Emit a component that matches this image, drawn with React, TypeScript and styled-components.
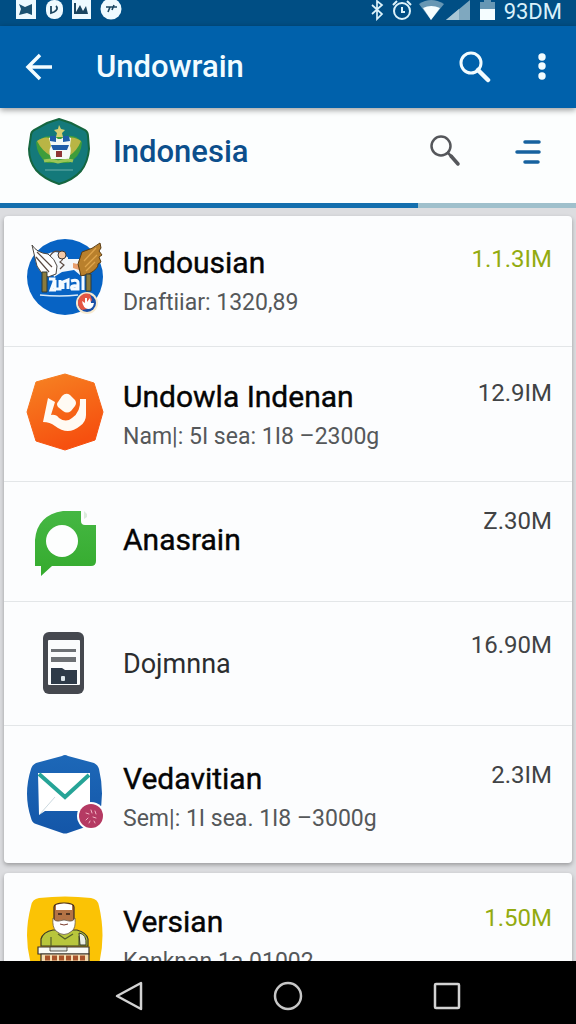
import React from "react";
import styled, { createGlobalStyle } from "styled-components";

const GlobalStyle = createGlobalStyle`
  * { box-sizing: border-box; }
  body { margin: 0; background: #dcdde0; font-family: Roboto, "Noto Sans", sans-serif; }
  ul { list-style: none; margin: 0; padding: 0; }
  h1, h2, h3, p { margin: 0; }
`;

const Screen = styled.div`
  display: flex;
  flex-direction: column;
  height: 100vh;
  overflow: hidden;
`;

const StatusBar = styled.div`
  flex: none;
  display: flex;
  justify-content: space-between;
  height: 26px;
  padding: 0 14px 0 16px;
  background: #004e84;
`;

const StatusGroup = styled.div<{ $gap: number }>`
  display: flex;
  align-items: flex-start;
  gap: ${(p) => p.$gap}px;
`;

const Clock = styled.span`
  font-size: 22px;
  line-height: 24px;
  color: #d9f1fb;
`;

const AppBar = styled.header`
  flex: none;
  display: flex;
  align-items: center;
  height: 82px;
  padding: 0 10px 0 15px;
  background: #0061ab;
  position: relative;
  box-shadow: 0 2px 6px rgba(0, 0, 0, 0.4);
`;

const BarTitle = styled.h1`
  flex: 1;
  padding-left: 33px;
  font-size: 31px;
  line-height: 36px;
  font-weight: 500;
  color: #f2fcff;
`;

const IconButton = styled.button`
  flex: none;
  display: grid;
  place-items: center;
  width: 48px;
  height: 48px;
  padding: 0;
  border: 0;
  background: none;
  cursor: pointer;
`;

const Actions = styled.div<{ $gap: number }>`
  display: flex;
  gap: ${(p) => p.$gap}px;
`;

const AccountBar = styled.section`
  flex: none;
  display: flex;
  align-items: center;
  height: 95px;
  padding: 0 24px 8px 27px;
  background: #fcfefe;
`;

const AccountName = styled.h2`
  flex: 1;
  padding-left: 22px;
  font-size: 31px;
  line-height: 36px;
  font-weight: 500;
  color: #0c4f8c;
`;

const Track = styled.div`
  flex: none;
  height: 5px;
  background: #9fc0cc;
`;

const TrackFill = styled.div`
  height: 100%;
  background: #146fae;
`;

const Feed = styled.main`
  flex: 1;
  min-height: 0;
  overflow: hidden;
  display: flex;
  flex-direction: column;
  gap: 10px;
  padding: 8px 4px 0;
  background: #dcdde0;
`;

const Card = styled.ul`
  flex: none;
  border-radius: 4px;
  background: #fcfdfe;
  box-shadow: 0 2px 4px rgba(0, 0, 0, 0.3);
`;

const Row = styled.li<{ $height: number; $top: number }>`
  display: flex;
  align-items: flex-start;
  min-height: ${(p) => p.$height}px;
  padding: ${(p) => p.$top}px 20px 0;
  & + & {
    border-top: 1px solid #e3e6e8;
  }
`;

const Copy = styled.div<{ $single: boolean }>`
  flex: 1;
  min-width: 0;
  display: flex;
  flex-direction: column;
  justify-content: ${(p) => (p.$single ? "center" : "flex-start")};
  gap: 12px;
  min-height: 82px;
  padding: ${(p) => (p.$single ? 0 : 10)}px 0 0 17px;
`;

const RowTitle = styled.h3<{ $light: boolean }>`
  font-size: ${(p) => (p.$light ? 27 : 30)}px;
  line-height: 32px;
  font-weight: 400;
  color: ${(p) => (p.$light ? "#2b2d2f" : "#050505")};
  -webkit-text-stroke: ${(p) => (p.$light ? "0" : "0.4px #050505")};
`;

const Detail = styled.p`
  font-size: 23px;
  line-height: 24px;
  color: #55585a;
  white-space: nowrap;
`;

const Price = styled.span<{ $accent: boolean }>`
  padding-top: 8px;
  font-size: 24px;
  line-height: 28px;
  color: ${(p) => (p.$accent ? "#93ab10" : "#414345")};
`;

const NavBar = styled.nav`
  flex: none;
  display: flex;
  justify-content: center;
  align-items: center;
  gap: 111px;
  height: 63px;
  padding-top: 6px;
  background: #000;
`;

const Avatar = styled.svg`
  flex: none;
  display: block;
  width: 82px;
  height: 82px;
`;

const EagleArt = () => (
  <Avatar viewBox="0 0 82 82" aria-hidden="true">
    <circle cx="41" cy="40" r="38" fill="#0763c4" />
    <path d="M23 17q8-4 15 0l7 4h18v9l-7 8-6-5-12 2-8 5z" fill="#f4f8fb" />
    <path d="M8 8q5 8 16 9 7 5 9 12l-1 8-8 3-7-5q-5-5-6-14z" fill="#fff" stroke="#4c4742" strokeWidth="1" />
    <path d="M13 15l15 15M12 20l13 15M26 19q4-7 11-4 5 6-1 10l4 3-4 4" fill="none" stroke="#5a4a42" strokeWidth="1.2" />
    <circle cx="38" cy="18" r="4" fill="#f3c9a8" stroke="#3d3836" />
    <path d="M44 18h17v4H44z" fill="#0763c4" />
    <path d="M49 26l9 2v6l-9-3z" fill="#e9a06f" />
    <path d="M76 6q-7 6-18 9l-4 12 3 12 8-2q10-6 9-10l3-2-2-5 3-2-3-4 2-3z" fill="#b9802c" stroke="#5b3d14" strokeWidth="1" />
    <path d="M72 11l-12 13M73 18L61 30M71 25l-9 9" stroke="#e0a54c" strokeWidth="1.3" />
    <path d="M18 35h5v20h-5zM62 37h5v17h-5z" fill="#8b7b3c" stroke="#2d3b3a" strokeWidth="1" />
    <path d="M25 42h5v3l-3 8h5M31 43v9h5v-9M39 52v-7l5-2v9M47 44q7-2 7 2v6h-6q-2-4 5-3M59 39v14" fill="none" stroke="#f5fbff" strokeWidth="3" />
    <path d="M16 58q20 2 38 0" fill="none" stroke="#d8eaf8" strokeWidth="1.6" />
    <circle cx="63" cy="66" r="11" fill="#f7ead0" />
    <circle cx="63" cy="66" r="9" fill="#184fa6" />
    <path d="M54 66a9 9 0 0 1 12-9l2 6-5 9-5 1a9 9 0 0 1-4-7z" fill="#e45543" />
    <path d="M58 64l3 2v-5h2v4l3-4 1 5h3q-1 6-6 6-5-1-6-8z" fill="#fff" />
  </Avatar>
);

const OrangeArt = () => (
  <Avatar viewBox="0 0 82 82" aria-hidden="true">
    <defs>
      <linearGradient id="orange" x1="0" y1="0" x2="0.4" y2="1">
        <stop offset="0" stopColor="#f68423" />
        <stop offset="1" stopColor="#f6500f" />
      </linearGradient>
    </defs>
    <path d="M41 3l29 9 9 29-8 28-30 10-29-9L3 41l9-30z" fill="url(#orange)" stroke="url(#orange)" strokeWidth="1" strokeLinejoin="round" />
    <path d="M38 25q4-4 8-1l5 5q2 3 0 6l-4 5q-4 3-8 0l-5-4q-2-3 0-5z" fill="#fffaf3" />
    <path d="M24 27l7 4-4 13q5-1 8 3 7 5 13 0 9-6 8-19h6v16q0 7-6 11-12 10-25 0-5-4-12-4z" fill="#fffaf3" />
  </Avatar>
);

const GreenArt = () => (
  <Avatar viewBox="0 0 82 82" aria-hidden="true">
    <defs>
      <linearGradient id="green" x1="0" y1="0" x2="0" y2="1">
        <stop offset="0" stopColor="#45b743" />
        <stop offset="1" stopColor="#35ab2e" />
      </linearGradient>
    </defs>
    <path d="M11 67V41q2-25 28-29h18v10q0 4 4 4h11v36q0 5-5 5H28L17 77V67z" fill="url(#green)" />
    <path d="M60 12l3 3v3l-3 2z" fill="#dcebdd" />
    <circle cx="38" cy="42" r="16" fill="#fdfefe" />
  </Avatar>
);

const PhoneArt = () => (
  <Avatar viewBox="0 0 82 82" aria-hidden="true">
    <rect x="19" y="9" width="41" height="62" rx="6" fill="#45484f" />
    <rect x="24" y="17" width="32" height="45" rx="1" fill="#fbfcfd" />
    <path d="M27 26h25v3H27zM27 34h25v5H27z" fill="#6e7175" />
    <path d="M27 45h11l3 2h12v14H27z" fill="#2e3a48" />
    <rect x="37" y="53" width="4" height="5" rx="1" fill="#dfe7ec" />
  </Avatar>
);

const MailArt = () => (
  <Avatar viewBox="0 0 82 82" aria-hidden="true">
    <defs>
      <linearGradient id="mail" x1="0" y1="0" x2="0" y2="1">
        <stop offset="0" stopColor="#1d68b8" />
        <stop offset="1" stopColor="#1456a8" />
      </linearGradient>
    </defs>
    <path d="M38 3q3-2 6 0l26 7q4 2 5 6 6 25 0 48-1 5-5 7l-26 9q-3 1-6 0L12 71q-4-1-5-6-8-24 0-49 1-4 5-6z" fill="url(#mail)" />
    <path d="M14 20h52v38H21l-6 4z" fill="#fff" />
    <path d="M16 61l15-17" stroke="#ccd9df" strokeWidth="1" />
    <path d="M15 21l26 23 24-22" fill="none" stroke="#26a497" strokeWidth="4" />
    <circle cx="67" cy="63" r="14" fill="#fff" />
    <circle cx="67" cy="63" r="12" fill="#b53a63" />
    <path d="M62 60l3 1M67 57l1 3M71 58l1 3M64 65l-2 2M69 64l3 1M66 68l-1 2M70 68l1 2" stroke="#f1b4c4" strokeWidth="1" strokeLinecap="round" />
  </Avatar>
);

const SellerArt = () => (
  <Avatar viewBox="0 0 82 82" aria-hidden="true">
    <path d="M15 2q26-3 52 0 7 1 8 8 7 30 0 58-2 9-10 10-24 4-48 0-8-1-10-10-8-28 0-58 1-7 8-8z" fill="#fbc305" />
    <path d="M17 50V43q2-7 12-9h24q10 3 11 9v7z" fill="#b8c63c" stroke="#3b3a25" strokeWidth="1.2" />
    <path d="M30 11q0-4 10-4t10 4v14q0 8-10 8t-10-8z" fill="#b47345" stroke="#3a2a20" strokeWidth="1.2" />
    <path d="M32 9q8-3 16 0v5H32z" fill="#fff" />
    <path d="M34 18h4M42 18h4" stroke="#2e1c14" strokeWidth="1.4" />
    <path d="M29 22q2 4 6 3 5-2 10 0 4 1 6-3 1 10-3 13-8 7-16 0-4-4-3-13z" fill="#fff" stroke="#6b5a4a" strokeWidth="0.8" />
    <path d="M36 28q4 2 8 0" stroke="#7a3b2c" fill="none" />
    <path d="M34 38l7 5 8-5M27 41v9M55 40v10" fill="none" stroke="#54602a" strokeWidth="1.2" />
    <path d="M55 37q8 1 7 12h-6z" fill="#e9eee4" stroke="#3b3a25" />
    <path d="M14 51h51v7H14z" fill="#f9faf5" stroke="#3a332a" strokeWidth="1.2" />
    <path d="M17 58h48v16H17z" fill="#f5dcae" stroke="#3a332a" strokeWidth="1.2" />
    <path d="M21 62h40" stroke="#a8532a" strokeWidth="5" strokeDasharray="5 2" />
    <path d="M26 51h17v4H26z" fill="#dde3df" stroke="#3a332a" strokeWidth="0.8" />
  </Avatar>
);

const Emblem = () => (
  <svg width="64" height="68" viewBox="0 0 64 68" aria-hidden="true">
    <path d="M32 1l12 4 14 7q3 2 3 6l1 13q-1 13-8 22-8 9-22 13-15-5-23-14Q2 43 2 31l2-14q0-3 3-5l13-7z" fill="#14797a" stroke="#15663f" strokeWidth="2" />
    <path d="M9 24q9-8 19-5h9q10-4 18 5-1 12-8 17l-5 4H20Q10 38 9 24z" fill="#3f9d3b" />
    <path d="M10 23q7-5 13-3l4 6-3 12q-9-5-14-15zM54 23q-7-5-13-3l-4 6 5 12q8-5 12-15z" fill="#b9b545" />
    <path d="M32 7l2 4 4 1-3 3 1 4h-7l1-4-3-3 4-1z" fill="#d8cf70" />
    <path d="M22 20q5-3 9 1h3q4-4 10-1l-1 8q2 4-1 13H24q-3-8 0-13z" fill="#f4faf6" />
    <path d="M23 18h6v6l-6-1zM36 18h6l1 5-7 1zM24 27h18l-2 5H26z" fill="#205ea8" />
    <rect x="29" y="33" width="6" height="6" fill="#8e3434" />
    <path d="M17 43q7-2 14 1 9-3 15-1" fill="none" stroke="#9bc657" strokeWidth="3" />
    <path d="M18 52h28" stroke="#4f9f9c" strokeWidth="1.5" />
  </svg>
);

type Item = {
  title: string;
  detail?: string;
  price: string;
  accent?: boolean;
  light?: boolean;
  height: number;
  top: number;
  Art: () => React.JSX.Element;
};

const mainItems: Item[] = [
  { title: "Undousian", detail: "Draftiiar: 1320,89", price: "1.1.3IM", accent: true, height: 130, top: 21, Art: EagleArt },
  { title: "Undowla Indenan", detail: "Nam|: 5I sea: 1I8 –2300g", price: "12.9IM", height: 135, top: 24, Art: OrangeArt },
  { title: "Anasrain", price: "Z.30M", height: 120, top: 17, Art: GreenArt },
  { title: "Dojmnna", price: "16.90M", light: true, height: 124, top: 21, Art: PhoneArt },
  { title: "Vedavitian", detail: "Sem|: 1I sea. 1I8 –3000g", price: "2.3IM", height: 138, top: 27, Art: MailArt },
];

const moreItems: Item[] = [
  { title: "Versian", detail: "Kanknan 1a  01002", price: "1.50M", accent: true, height: 138, top: 23, Art: SellerArt },
];

const ItemCard = ({ items }: { items: Item[] }) => (
  <Card>
    {items.map(({ title, detail, price, accent, light, height, top, Art }) => (
      <Row key={title} $height={height} $top={top}>
        <Art />
        <Copy $single={!detail}>
          <RowTitle $light={!!light}>{title}</RowTitle>
          {detail && <Detail>{detail}</Detail>}
        </Copy>
        <Price $accent={!!accent}>{price}</Price>
      </Row>
    ))}
  </Card>
);

export default function App() {
  return (
    <Screen>
      <GlobalStyle />
      <StatusBar>
        <StatusGroup $gap={10}>
          <svg width="106" height="21" viewBox="0 0 106 21" aria-hidden="true">
            <path d="M0 0h20v19H0z" fill="#eefaff" />
            <path d="M3 4l6 3 7-3v11l-5-2-8 2 2-6z" fill="#1b5272" />
            <rect x="30" y="0" width="17" height="19" rx="8" fill="#eefaff" />
            <path d="M35 6v7l3-1M40 6q3 3-2 6" stroke="#1b4560" strokeWidth="1.8" fill="none" />
            <path d="M56 0h19v19H56z" fill="#eefaff" />
            <path d="M58 3h2v9l4-7 3 6 3-5 2 8H58z" fill="#1b4560" />
            <circle cx="95" cy="9" r="10.500" fill="#eefaff" />
            <path d="M90 7h11M94 7l-2 5M98 5l-2 5" stroke="#1b4560" strokeWidth="1.600" />
          </svg>
        </StatusGroup>
        <StatusGroup $gap={8}>
          <svg width="126" height="21" viewBox="0 0 126 21" aria-hidden="true">
            <path d="M2 5l10 9-5 5V1l5 4-10 9" fill="none" stroke="#dcf3fb" strokeWidth="1.700" />
            <circle cx="32" cy="11" r="8" fill="none" stroke="#dcf3fb" strokeWidth="2" />
            <path d="M32 7v5h3M23 5l4-4M41 5l-4-4" fill="none" stroke="#dcf3fb" strokeWidth="2" />
            <path d="M49 4q12-8 25 0L61 20z" fill="#6797b4" />
            <path d="M53 8q8-4 17 0l-9 12z" fill="#f5fdff" />
            <path d="M76 20L100 0v20z" fill="#7fa8bf" />
            <path d="M76 20l13-11v11z" fill="#a9c7d6" />
            <path d="M110 2h4V0h7v2h4v8h-15z" fill="#6797b4" />
            <path d="M110 9h15v11h-15z" fill="#f5fdff" />
          </svg>
          <Clock>93DM</Clock>
        </StatusGroup>
      </StatusBar>

      <AppBar>
        <IconButton aria-label="Back">
          <svg width="28" height="28" viewBox="0 0 28 28" fill="none" stroke="#f2fcff" strokeWidth="3.500">
            <path d="M27 14H4M15 2L3 14l12 12" />
          </svg>
        </IconButton>
        <BarTitle>Undowrain</BarTitle>
        <Actions $gap={19}>
          <IconButton aria-label="Search">
            <svg width="32" height="32" viewBox="0 0 32 32" fill="none" stroke="#f2fcff">
              <circle cx="12" cy="12" r="10" strokeWidth="3" />
              <path d="M19 19l10 10" strokeWidth="4.500" strokeLinecap="round" />
            </svg>
          </IconButton>
          <IconButton aria-label="More options">
            <svg width="8" height="28" viewBox="0 0 8 28" fill="#f2fcff">
              <circle cx="4" cy="4" r="3.700" />
              <circle cx="4" cy="13" r="3.700" />
              <circle cx="4" cy="23" r="3.700" />
            </svg>
          </IconButton>
        </Actions>
      </AppBar>

      <AccountBar>
        <Emblem />
        <AccountName>Indonesia</AccountName>
        <Actions $gap={35}>
          <IconButton aria-label="Search in Indonesia">
            <svg width="32" height="36" viewBox="0 0 32 36" fill="none" stroke="#55575b">
              <circle cx="12" cy="12" r="9.500" strokeWidth="2.500" />
              <path d="M18 18l5 5" strokeWidth="2.500" />
              <path d="M22 22l7 8" strokeWidth="3.500" strokeLinecap="round" />
            </svg>
          </IconButton>
          <IconButton aria-label="Sort">
            <svg width="26" height="26" viewBox="0 0 26 26" stroke="#17629f" strokeWidth="3.500" strokeLinecap="round">
              <path d="M10 3h14M2 13h22M10 23h13" />
            </svg>
          </IconButton>
        </Actions>
      </AccountBar>
      <Track role="progressbar" aria-label="Loading" aria-valuenow={73} aria-valuemin={0} aria-valuemax={100}>
        <TrackFill style={{ width: "72.6%" }} />
      </Track>

      <Feed>
        <ItemCard items={mainItems} />
        <ItemCard items={moreItems} />
      </Feed>

      <NavBar>
        <IconButton aria-label="Back">
          <svg width="28" height="30" viewBox="0 0 28 30" fill="none" stroke="#d2d2d2" strokeWidth="2.500" strokeLinejoin="round">
            <path d="M26 2v26L2 15z" />
          </svg>
        </IconButton>
        <IconButton aria-label="Home">
          <svg width="30" height="30" viewBox="0 0 30 30" fill="none" stroke="#c6c6c6" strokeWidth="2.500">
            <circle cx="15" cy="15" r="13" />
          </svg>
        </IconButton>
        <IconButton aria-label="Recent apps">
          <svg width="28" height="28" viewBox="0 0 28 28" fill="none" stroke="#d2d2d2" strokeWidth="2.500">
            <rect x="2" y="2" width="24" height="24" rx="1" />
          </svg>
        </IconButton>
      </NavBar>
    </Screen>
  );
}
